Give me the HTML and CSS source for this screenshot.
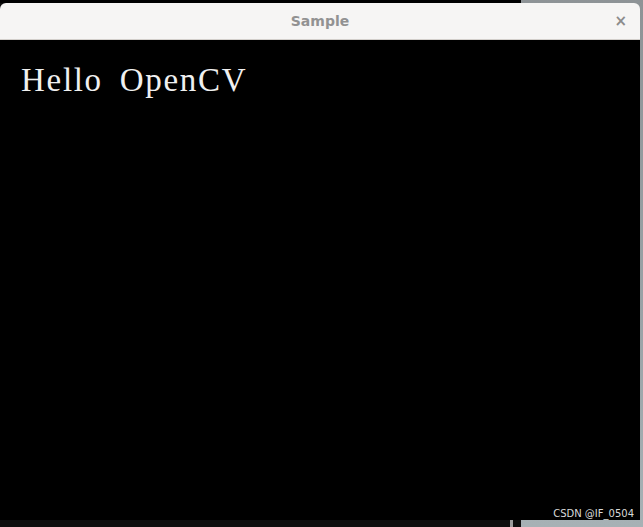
FILE: index.html
```html
<!DOCTYPE html>
<html>
<head>
<meta charset="utf-8">
<title>Sample</title>
<link rel="stylesheet" href="styles.css">
</head>
<body>
<div class="desktop">
  <div class="back-window"><div class="back-scroll"></div></div>
  <div class="window">
    <div class="titlebar">
      <span class="title">Sample</span>
      <span class="close">×</span>
    </div>
    <div class="canvas">
      <div class="hello">Hello OpenCV</div>
    </div>
  </div>
  <div class="watermark">CSDN @IF_0504</div>
</div>
</body>
</html>
```
FILE: styles.css
```css
html, body {
  margin: 0;
  padding: 0;
}
body {
  width: 643px;
  height: 527px;
  overflow: hidden;
}
.desktop {
  position: relative;
  width: 643px;
  height: 527px;
  background: linear-gradient(180deg, #8e9396 0%, #9aa2a6 60%, #a7b1b5 100%);
  overflow: hidden;
}
.back-window {
  position: absolute;
  left: 0;
  top: 0;
  width: 521px;
  height: 527px;
  background: #0e0e0e;
}
.back-window::before {
  content: "";
  position: absolute;
  left: 0;
  top: 0;
  width: 521px;
  height: 3px;
  background: #000;
}
.back-scroll {
  position: absolute;
  left: 510px;
  top: 500px;
  width: 3px;
  height: 27px;
  background: #9c9c9c;
}
.window {
  position: absolute;
  left: 0;
  top: 3px;
  width: 640px;
  display: flex;
  flex-direction: column;
  border-radius: 6px 6px 0 0;
  overflow: hidden;
}
.titlebar {
  height: 36px;
  background: #f6f5f4;
  border-bottom: 1px solid #d3cfcb;
  display: flex;
  align-items: center;
  justify-content: center;
  position: relative;
}
.title {
  font-family: "DejaVu Sans", sans-serif;
  font-weight: bold;
  font-size: 14px;
  color: #929292;
  margin-top: 0;
}
.close {
  position: absolute;
  right: 13px;
  top: 9px;
  font-family: "DejaVu Sans", sans-serif;
  font-weight: bold;
  font-size: 15px;
  color: #8c8c8c;
}
.canvas {
  height: 480px;
  background: #000;
  padding: 24px 0 0 21px;
  box-sizing: border-box;
}
.hello {
  font-family: "Liberation Serif", serif;
  font-size: 33px;
  line-height: 33px;
  color: #f0f0f0;
  letter-spacing: 1.7px;
  word-spacing: 7px;
}
.watermark {
  position: absolute;
  right: 9px;
  top: 507px;
  font-family: "DejaVu Sans", sans-serif;
  font-size: 10px;
  color: #d8d8d8;
  line-height: 14px;
}
```
